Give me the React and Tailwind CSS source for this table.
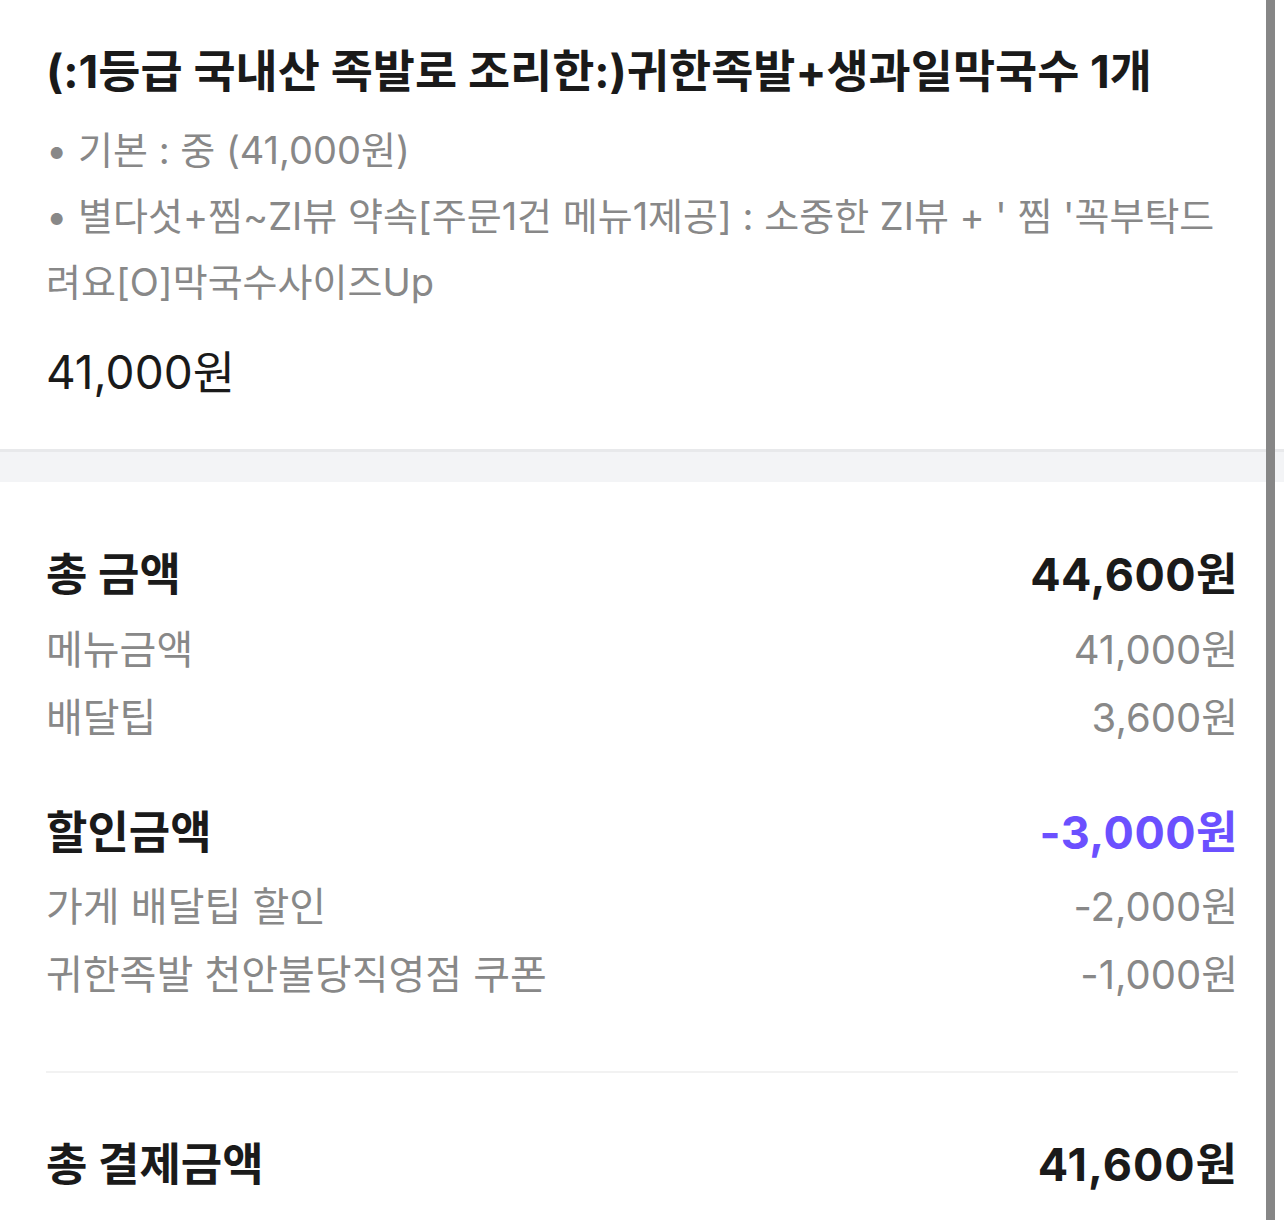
import React from 'react';

const summaryRows = [
  { label: '메뉴금액', value: '41,000원' },
  { label: '배달팁', value: '3,600원' },
];

const discountRows = [
  { label: '가게 배달팁 할인', value: '-2,000원' },
  { label: '귀한족발 천안불당직영점 쿠폰', value: '-1,000원' },
];

const App = () => {
  return (
    <div className="relative min-h-[1220px] bg-white overflow-hidden font-['Inter','Noto_Sans_CJK_KR',sans-serif] text-[#1a1a1a]">
      {/* Order item */}
      <div className="px-[46px] pt-[44px] pb-[49px]">
        <h1 className="text-[45.8px] leading-[56px] font-bold whitespace-nowrap">
          (:1등급 국내산 족발로 조리한:)귀한족발+생과일막국수 1개
        </h1>
        <div className="mt-[17px] text-[38px] leading-[66px] text-[#888888]">
          <p>• 기본 : 중 (41,000원)</p>
          <p>• 별다섯+찜~ZI뷰 약속[주문1건 메뉴1제공] : 소중한 ZI뷰 + ' 찜 '꼭부탁드려요[O]막국수사이즈Up</p>
        </div>
        <p className="mt-[29px] text-[46px] leading-[56px]">41,000원</p>
      </div>

      {/* Section divider */}
      <div className="h-[33px] border-t-[3px] border-[#e8e9eb] bg-[#f3f4f6]"></div>

      {/* Payment summary */}
      <div className="px-[46px] pt-[65px]">
        <div className="flex items-center justify-between text-[45px] leading-[56px] font-bold">
          <span>총 금액</span>
          <span className="tracking-[0.5px]">44,600원</span>
        </div>
        <div className="mt-[13px]">
          {summaryRows.map((row) => (
            <div key={row.label} className="flex items-center justify-between text-[40px] leading-[68px] text-[#888888]">
              <span>{row.label}</span>
              <span>{row.value}</span>
            </div>
          ))}
        </div>

        <div className="mt-[53px] flex items-center justify-between text-[45px] leading-[56px] font-bold">
          <span>할인금액</span>
          <span className="text-[#6b50ff] tracking-[0.5px]">-3,000원</span>
        </div>
        <div className="mt-[12px]">
          {discountRows.map((row) => (
            <div key={row.label} className="flex items-center justify-between text-[40px] leading-[68px] text-[#888888]">
              <span>{row.label}</span>
              <span>{row.value}</span>
            </div>
          ))}
        </div>

        <div className="mt-[62px] h-[2px] bg-[#f2f2f2]"></div>

        <div className="mt-[64px] flex items-center justify-between text-[45px] leading-[56px] font-bold">
          <span>총 결제금액</span>
          <span className="tracking-[1px]">41,600원</span>
        </div>
      </div>

      {/* Scrollbar overlay */}
      <div className="absolute top-0 bottom-0 right-[9px] w-[9px] bg-[#868686]"></div>
    </div>
  );
};

export default App;
